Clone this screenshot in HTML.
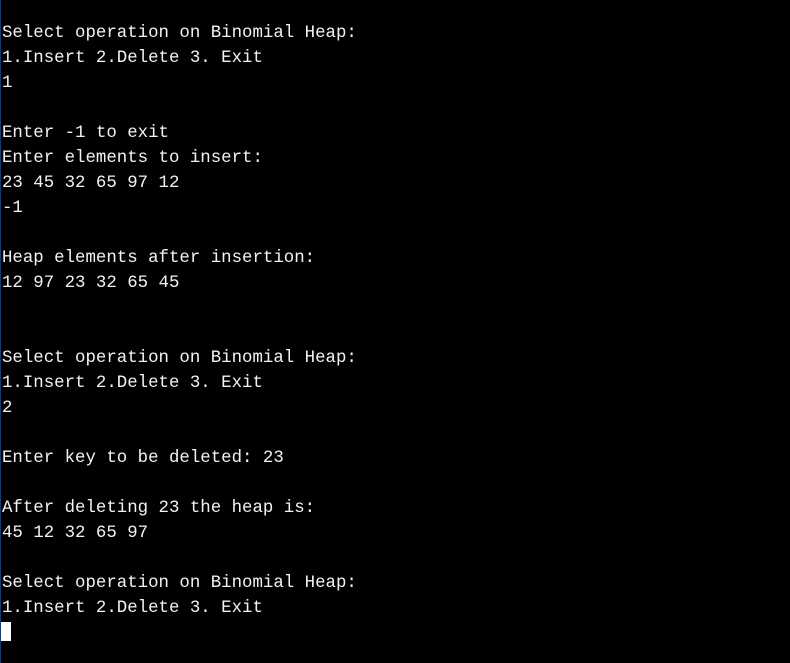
<!DOCTYPE html>
<html><head><style>
html,body{margin:0;padding:0;background:#000;width:790px;height:663px;overflow:hidden}
pre{margin:0;position:absolute;left:2px;top:21px;font-family:"Liberation Mono",monospace;font-size:17.4px;line-height:25px;color:#f2f2f2}
.cur{position:absolute;left:1px;top:622px;width:10px;height:19px;background:#fff}
.edge{position:absolute;left:0;top:0;width:1px;height:663px;background:#1a3a6a}
</style></head><body>
<div class="edge"></div>
<pre>Select operation on Binomial Heap:
1.Insert 2.Delete 3. Exit
1

Enter -1 to exit
Enter elements to insert:
23 45 32 65 97 12
-1

Heap elements after insertion:
12 97 23 32 65 45


Select operation on Binomial Heap:
1.Insert 2.Delete 3. Exit
2

Enter key to be deleted: 23

After deleting 23 the heap is:
45 12 32 65 97

Select operation on Binomial Heap:
1.Insert 2.Delete 3. Exit</pre>
<div class="cur"></div>
</body></html>
